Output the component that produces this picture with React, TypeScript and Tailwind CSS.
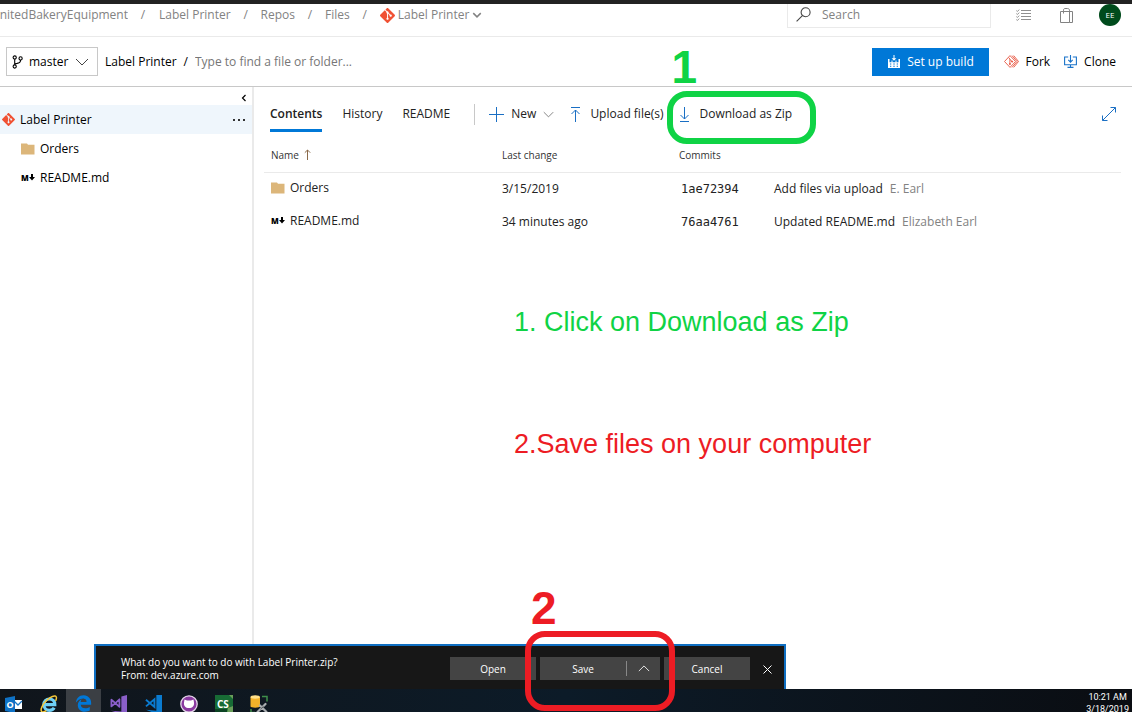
import React from "react";
import { SiGit } from "react-icons/si";
import { FaEdgeLegacy } from "react-icons/fa";

type IconProps = { className?: string };

function Chevron({ className = "" }: IconProps) {
  return (
    <svg viewBox="0 0 14 8" fill="none" stroke="currentColor" className={className} aria-hidden="true">
      <path d="M1 1l6 6 6-6" />
    </svg>
  );
}

function SmallChevron({ className = "" }: IconProps) {
  return (
    <svg viewBox="0 0 8 8" fill="none" stroke="currentColor" strokeWidth="1.2" className={className} aria-hidden="true">
      <path d="M1 2.5l3 3 3-3" />
    </svg>
  );
}

function BranchIcon({ className = "" }: IconProps) {
  return (
    <svg viewBox="0 0 11 14" fill="none" stroke="currentColor" strokeWidth="1.1" className={className} aria-hidden="true">
      <circle cx="2.7" cy="2.5" r="1.6" />
      <circle cx="2.7" cy="11.5" r="1.6" />
      <circle cx="8.6" cy="3.4" r="1.6" />
      <path d="M2.7 4.2v5.6M8.6 5c0 2.6-1.6 3.2-3.6 3.4-1.4.1-2.1.6-2.3 1.4" />
    </svg>
  );
}

function SearchIcon({ className = "" }: IconProps) {
  return (
    <svg viewBox="0 0 15 15" fill="none" stroke="currentColor" strokeWidth="1.1" className={className} aria-hidden="true">
      <circle cx="9.6" cy="5.3" r="4.5" />
      <path d="M6.4 8.6L.6 14.4" />
    </svg>
  );
}

function ListIcon({ className = "" }: IconProps) {
  return (
    <svg viewBox="0 0 15 12" fill="none" stroke="currentColor" strokeWidth="0.9" className={className} aria-hidden="true">
      <path d="M5 1.5h10M5 4.5h10M5 7.5h10M5 10.5h10" />
      <path d="M.4 1.6l1 .9L3.2.6M.4 4.6l1 .9 1.8-1.9M.4 7.6l1 .9 1.8-1.9M.4 10.6l1 .9 1.8-1.9" />
    </svg>
  );
}

function BagIcon({ className = "" }: IconProps) {
  return (
    <svg viewBox="0 0 13 15" fill="none" stroke="currentColor" className={className} aria-hidden="true">
      <path d="M.5 3.5h9v11h-9zM9.5 3.5h3v11h-3" />
      <path d="M3.5 5.5V2.2C3.5 1.200 4 .5 5 .5h2.500c1.200 0 2 .8 2 1.700v12" />
    </svg>
  );
}

function BuildIcon({ className = "" }: IconProps) {
  return (
    <svg viewBox="0 0 12 13" fill="currentColor" className={className} aria-hidden="true">
      <path d="M5.500 0h1v3.300h1.900L6 5.700 3.600 3.300h1.900z" />
      <path
        fillRule="evenodd"
        d="M0 4h1.500v3.200h2V5.400h1v1.800h3V5.400h1v1.800h2V4H12v9H0zM2 8.500v1h1.300v-1zm3.300 0v1h1.400v-1zm3.400 0v1H10v-1zM2 10.700v1h1.300v-1zm3.300 0v1h1.400v-1zm3.400 0v1H10v-1z"
      />
    </svg>
  );
}

function ForkIcon({ className = "" }: IconProps) {
  return (
    <svg viewBox="0 0 15 13" fill="none" stroke="currentColor" strokeLinejoin="round" strokeWidth="0.9" className={className} aria-hidden="true">
      <path d="M6 .6l5.500 5.900L6 12.400.5 6.500z" />
      <path d="M8 .6l5 5.900-5 5.900M9.700.6l4.800 5.900-4.800 5.900" />
      <path d="M4.600 2.500l1.300 1.500v5M5.900 4.400l2.300 2.200" />
      <circle cx="5.900" cy="9" r=".6" fill="currentColor" />
      <circle cx="8.100" cy="6.600" r=".6" fill="currentColor" />
    </svg>
  );
}

function CloneIcon({ className = "" }: IconProps) {
  return (
    <svg viewBox="0 0 13 13" fill="none" stroke="currentColor" strokeWidth="1.1" className={className} aria-hidden="true">
      <path d="M4.200 2H.6v7.800h11.800V2H8.800M6.500 0v7M4.300 4.900l2.200 2.200 2.200-2.200M6.500 10v2.300M3.500 12.400h6" />
    </svg>
  );
}

function PlusIcon({ className = "" }: IconProps) {
  return (
    <svg viewBox="0 0 15 15" fill="none" stroke="currentColor" className={className} aria-hidden="true">
      <path d="M7.500 0v15M0 7.500h15" />
    </svg>
  );
}

function UploadIcon({ className = "" }: IconProps) {
  return (
    <svg viewBox="0 0 11 15" fill="none" stroke="currentColor" className={className} aria-hidden="true">
      <path d="M1 .5h9M5.500 15V3M1.500 7l4-4 4 4" />
    </svg>
  );
}

function DownloadIcon({ className = "" }: IconProps) {
  return (
    <svg viewBox="0 0 11 15" fill="none" stroke="currentColor" className={className} aria-hidden="true">
      <path d="M1 14.500h9M5.500 0v12M1.500 8l4 4 4-4" />
    </svg>
  );
}

function ExpandIcon({ className = "" }: IconProps) {
  return (
    <svg viewBox="0 0 14 14" fill="none" stroke="currentColor" className={className} aria-hidden="true">
      <path d="M.5 13.500l13-13M8.500.5h5v5M.5 8.500v5h5" />
    </svg>
  );
}

function FolderIcon() {
  return (
    <svg viewBox="0 0 14 12" className="h-3 w-[14px] shrink-0" fill="#dcb67a" aria-hidden="true">
      <path d="M0 .5h6l1 1.300h6.500V11.500H0z" />
    </svg>
  );
}

function MarkdownIcon() {
  return (
    <span className="flex w-[14px] shrink-0 items-center text-[8px] leading-[10px] font-extrabold text-black" aria-hidden="true">
      M
      <svg viewBox="0 0 6 7" className="h-[7px] w-[6px]" fill="currentColor">
        <path d="M2 0h2v3h2L3 6.500 0 3h2z" />
      </svg>
    </span>
  );
}

function VsIcon({ className = "" }: IconProps) {
  return (
    <svg viewBox="0 0 18 20" className={className} aria-hidden="true">
      <path fill="currentColor" d="M12 1.500l6-1.500v18l-6 2-11-3.500 11 1z" />
      <path fill="none" stroke="currentColor" strokeWidth="1.900" strokeLinejoin="round" d="M1.500 5v7l4.200-3.500zM10 4.500v8L5.700 8.500z" />
    </svg>
  );
}

function VsCodeIcon({ className = "" }: IconProps) {
  return (
    <svg viewBox="0 0 18 20" className={className} aria-hidden="true">
      <path fill="currentColor" d="M12 0h6v18l-6 2L1 15.500l11 1z" />
      <path fill="none" stroke="currentColor" strokeWidth="2" d="M1 5l9 7.500v-8L1 12" />
    </svg>
  );
}

function OutlookIcon() {
  return (
    <svg viewBox="0 0 18 18" className="h-[18px] w-[18px]" aria-hidden="true">
      <path fill="#fff" d="M9 5h8v9H9z" />
      <path fill="none" stroke="#1976c5" strokeWidth="1.300" d="M9 6l4 4 4-4" />
      <path fill="#0f72c6" d="M0 3l10-2v17L0 16z" />
      <text x="1.500" y="13" fill="#fff" fontSize="9" fontWeight="700" fontFamily="Open Sans, sans-serif">O</text>
    </svg>
  );
}

function ExplorerIcon() {
  return (
    <svg viewBox="0 0 18 18" className="h-[18px] w-[18px]" fill="none" aria-hidden="true">
      <path stroke="#6fd0f5" strokeWidth="3.200" d="M4.500 9.700h10.300c0-3.600-2.400-5.700-5.400-5.700-3.200 0-5.600 2.400-5.600 5.600s2.400 5.800 5.600 5.800c2.200 0 3.900-1 4.800-2.600" />
      <path stroke="#f4c83a" strokeWidth="1.500" strokeLinecap="round" d="M15.800 5.500c1-2.400.9-4.200-.6-4.500-2.700-.6-8 3-11.200 7.400C1.200 12.200.4 15.600 1.800 16.600c.9.600 2.400.2 4-.7" />
    </svg>
  );
}

function GitHubIcon() {
  return (
    <svg viewBox="0 0 18 18" className="h-[18px] w-[18px]" aria-hidden="true">
      <circle cx="9" cy="9" r="8.200" fill="#8a3aa0" stroke="#e3d5e8" strokeWidth="1.300" />
      <path fill="#fff" d="M4.500 4.500l2.500 1h4l2.500-1 .5 3c.5 3.500-1.500 5.500-5 5.500S3.500 11 4 7.500z" />
    </svg>
  );
}

function CsIcon() {
  return (
    <svg viewBox="0 0 18 18" className="h-[18px] w-[18px]" aria-hidden="true">
      <path fill="#176b35" d="M0 0h18v18H0z" />
      <path fill="#6a9f5a" d="M14 0h4v4zM13 13l5-2v7h-6z" />
      <path fill="#0c4423" d="M0 14h12v4H0z" />
      <text x="2" y="12.500" fill="#fff" fontSize="10" fontWeight="700" fontFamily="Open Sans, sans-serif">CS</text>
    </svg>
  );
}

function SqlIcon() {
  return (
    <svg viewBox="0 0 18 18" className="h-[18px] w-[18px]" aria-hidden="true">
      <path fill="#f3b229" d="M.5 2v9.500c0 1.500 9.500 1.500 9.500 0V2z" />
      <ellipse cx="5.200" cy="2" rx="4.700" ry="1.700" fill="#ffe08a" />
      <path fill="none" stroke="#3f8f4b" strokeWidth="1.500" d="M12 1.500h5v5M1 14v3.500h4" />
      <path stroke="#a9adb0" strokeWidth="2.200" strokeLinecap="round" d="M7.500 17l8-8M10 10.500l6.500 6.500" />
      <path stroke="#33383c" strokeWidth=".8" d="M10.500 14.200l3-2.800" />
    </svg>
  );
}

function Crumb({ children }: { children: React.ReactNode }) {
  return (
    <>
      <a href="#crumb" className="whitespace-nowrap">{children}</a>
      <span className="w-[6px] text-center">/</span>
    </>
  );
}

function Header() {
  return (
    <header className="flex h-[33px] shrink-0 items-start border-b border-[#eaeaea] text-[#828282]">
      <nav aria-label="Breadcrumb" className="flex h-[22px] items-center gap-3">
        <a href="#org" className="flex w-[128px] justify-end overflow-hidden whitespace-nowrap">UnitedBakeryEquipment</a>
        <span className="mr-[1px] w-[6px] text-center">/</span>
        <Crumb>Label Printer</Crumb>
        <Crumb>Repos</Crumb>
        <Crumb>Files</Crumb>
        <a href="#repo" className="flex items-center gap-[3px] whitespace-nowrap">
          <SiGit className="h-[15px] w-[15px] text-[#f05133]" />
          Label Printer
          <SmallChevron className="h-[10px] w-[10px]" />
        </a>
      </nav>
      <label className="ml-auto flex h-6 w-[204px] items-center gap-[11px] border-x border-b border-[#eaeaea] pb-[2px] pl-2">
        <SearchIcon className="h-[15px] w-[15px] shrink-0 text-[#444]" />
        <input aria-label="Search" placeholder="Search" className="w-full min-w-0 outline-none placeholder:text-[#828282]" />
      </label>
      <div className="ml-[25px] mr-[11px] flex h-[22px] items-center">
        <button aria-label="Work items"><ListIcon className="h-3 w-[15px]" /></button>
        <button aria-label="Marketplace" className="ml-[29px]"><BagIcon className="h-[15px] w-[13px]" /></button>
        <button className="ml-[26px] flex h-[22px] w-[22px] items-center justify-center rounded-full bg-[#004b1c] text-[8px] text-white">EE</button>
      </div>
    </header>
  );
}

function RepoBar() {
  return (
    <div className="flex h-[50px] shrink-0 items-center border-b border-[#c8c8c8] pr-4 pl-[6px] text-black">
      <button className="flex h-[29px] w-[92px] items-center border border-[#c8c8c8] pl-[5px]">
        <BranchIcon className="h-[14px] w-[11px]" />
        <span className="ml-[6px]">master</span>
        <Chevron className="ml-auto mr-2 h-[8px] w-[14px] text-[#444]" />
      </button>
      <a href="#root-folder" className="ml-[7px] whitespace-nowrap">Label Printer</a>
      <span className="mx-[7px]">/</span>
      <input aria-label="Find a file or folder" placeholder="Type to find a file or folder..." className="min-w-0 flex-1 outline-none placeholder:text-[#767676]" />
      <button className="flex h-7 w-[117px] items-center justify-center gap-[7px] bg-[#0078d7] whitespace-nowrap text-white">
        <BuildIcon className="h-[13px] w-3" />
        Set up build
      </button>
      <button className="ml-[15px] flex items-center gap-[6px]">
        <ForkIcon className="h-[13px] w-[15px] text-[#e8553f]" />
        Fork
      </button>
      <button className="ml-[14px] flex items-center gap-[7px]">
        <CloneIcon className="h-[13px] w-[13px] text-[#1a73c9]" />
        Clone
      </button>
    </div>
  );
}

function Sidebar() {
  return (
    <aside className="w-[254px] shrink-0 border-r-2 border-[#eaeaea] text-black">
      <div className="flex h-[18px] items-center justify-end pt-1 pr-[4px]">
        <button aria-label="Collapse" className="flex"><SmallChevron className="h-2 w-2 rotate-90" /></button>
      </div>
      <div className="flex h-[29px] items-center gap-[5px] bg-[#eff6fc] px-[2px]">
        <SiGit className="h-[13px] w-[13px] text-[#f05133]" />
        <a href="#label-printer">Label Printer</a>
        <button aria-label="More" className="ml-auto mr-[5px] flex gap-[3px]">
          <span className="h-[2px] w-[2px] bg-[#333]" />
          <span className="h-[2px] w-[2px] bg-[#333]" />
          <span className="h-[2px] w-[2px] bg-[#333]" />
        </button>
      </div>
      <a href="#orders" className="flex h-[29px] items-center gap-[5px] pl-[21px]"><FolderIcon />Orders</a>
      <a href="#readme" className="flex h-[29px] items-center gap-[5px] pl-[21px]"><MarkdownIcon />README.md</a>
    </aside>
  );
}

function Toolbar() {
  return (
    <div className="flex h-[45px] items-center whitespace-nowrap">
      <nav className="flex h-full items-start gap-5" aria-label="Views">
        <a href="#contents" className="mt-3 flex h-[33px] items-start border-b-[3px] border-[#0078d7] pt-[5px] leading-5 font-semibold">Contents</a>
        <a href="#history" className="mt-[17px] leading-5">History</a>
        <a href="#readme-tab" className="mt-[17px] leading-5">README</a>
      </nav>
      <div className="flex h-full flex-1 items-center pt-[9px]">
        <span className="ml-6 h-[21px] w-px bg-[#c8c8c8]" />
        <button className="ml-[14px] flex items-center gap-[7px]">
          <PlusIcon className="h-[15px] w-[15px] text-[#1a6fc4]" />
          New
          <Chevron className="h-[7px] w-[11px] text-[#666]" />
        </button>
        <button className="ml-4 flex items-center gap-[9px]">
          <UploadIcon className="h-[15px] w-[11px] text-[#1a6fc4]" />
          Upload file(s)
        </button>
        <div className="relative ml-4">
          <button className="flex items-center gap-[9px]">
            <DownloadIcon className="h-[15px] w-[11px] text-[#1a6fc4]" />
            Download as Zip
          </button>
          <div className="pointer-events-none absolute -top-[13px] -bottom-5 -left-3 -right-6 rounded-[20px] border-6 border-[#0fd345]" />
          <span className="pointer-events-none absolute -left-2 -top-[60px] font-['Liberation_Sans',sans-serif] text-[46px] leading-[46px] font-bold text-[#0fd345]">1</span>
        </div>
        <button aria-label="Full screen" className="mr-[5px] ml-auto"><ExpandIcon className="h-[14px] w-[14px] text-[#1a6fc4]" /></button>
      </div>
    </div>
  );
}

const files = [
  { name: "Orders", icon: <FolderIcon />, change: "3/15/2019", hash: "1ae72394", message: "Add files via upload", author: "E. Earl" },
  { name: "README.md", icon: <MarkdownIcon />, change: "34 minutes ago", hash: "76aa4761", message: "Updated README.md", author: "Elizabeth Earl" },
];

function FileTable() {
  return (
    <table className="w-full table-fixed border-collapse text-left">
      <colgroup>
        <col className="w-[238px]" />
        <col className="w-[177px]" />
        <col className="w-[95px]" />
        <col />
      </colgroup>
      <thead>
        <tr className="h-10 border-b border-[#eaeaea] text-[10px] text-[#333]">
          <th className="pt-[6px] pl-[7px] font-normal">
            <span className="flex items-center gap-[5px]">
              Name
              <svg viewBox="0 0 7 11" className="h-[11px] w-[7px]" fill="none" stroke="#8a6a4a" aria-hidden="true">
                <path d="M3.500 11V1M.8 3.700L3.500 1l2.700 2.700" />
              </svg>
            </span>
          </th>
          <th className="pt-[6px] font-normal">Last change</th>
          <th className="pt-[6px] font-normal" colSpan={2}>Commits</th>
        </tr>
      </thead>
      <tbody>
        {files.map((file) => (
          <tr key={file.name} className="h-[33px]">
            <td className="pb-[2px] pl-[7px]">
              <a href="#file" className="flex items-center gap-[5px]">{file.icon}{file.name}</a>
            </td>
            <td>{file.change}</td>
            <td className="pl-[2px] font-['DejaVu_Sans_Mono','Liberation_Mono',monospace]">{file.hash}</td>
            <td className="whitespace-nowrap">
              {file.message}
              <span className="ml-[7px] text-[#828282]">{file.author}</span>
            </td>
          </tr>
        ))}
      </tbody>
    </table>
  );
}

function DownloadBar() {
  return (
    <div role="dialog" aria-label="Download" className="absolute bottom-0 left-[94px] flex h-[45px] w-[692px] items-center border-x-2 border-t-2 border-[#0f6fc2] bg-[#171717] pl-[25px] text-[10px] text-white">
      <p className="mt-[3px] leading-[13px] whitespace-nowrap">
        What do you want to do with Label Printer.zip?
        <br />
        From: dev.azure.com
      </p>
      <div className="mt-[2px] ml-auto flex items-center gap-1">
        <button className="h-[23px] w-[86px] bg-[#444]">Open</button>
        <div className="relative flex h-[23px] bg-[#444]">
          <button className="w-[86px]">Save</button>
          <span className="my-1 w-px bg-[#888]" />
          <button aria-label="Save options" className="flex w-[33px] items-center justify-center">
            <Chevron className="h-[7px] w-3 rotate-180" />
          </button>
          <div className="pointer-events-none absolute -top-[26px] -right-[15px] -bottom-[31px] -left-[15px] z-10 rounded-[20px] border-6 border-[#ed1c24]" />
          <span className="pointer-events-none absolute -top-[72px] -left-[9px] font-['Liberation_Sans',sans-serif] text-[46px] leading-[46px] font-bold text-[#ed1c24]">2</span>
        </div>
        <button className="h-[23px] w-[86px] bg-[#444]">Cancel</button>
      </div>
      <button aria-label="Close" className="mr-3 ml-[13px] pt-1">
        <svg viewBox="0 0 9 9" className="h-[9px] w-[9px]" fill="none" stroke="currentColor" aria-hidden="true">
          <path d="M.5.5l8 8M8.500.5l-8 8" />
        </svg>
      </button>
    </div>
  );
}

const apps = [
  { name: "Outlook", active: false, icon: <OutlookIcon /> },
  { name: "Internet Explorer", active: false, icon: <ExplorerIcon /> },
  { name: "Edge", active: true, icon: <FaEdgeLegacy className="h-[17px] w-[17px] text-[#0078d7]" /> },
  { name: "Visual Studio", active: false, icon: <VsIcon className="h-[19px] w-[17px] text-[#8a5fc9]" /> },
  { name: "Visual Studio Code", active: false, icon: <VsCodeIcon className="h-[19px] w-[17px] text-[#0a7bd0]" /> },
  { name: "GitHub", active: false, icon: <GitHubIcon /> },
  { name: "CS", active: false, icon: <CsIcon /> },
  { name: "SQL tools", active: false, icon: <SqlIcon /> },
];

function Taskbar() {
  return (
    <footer className="flex h-[23px] shrink-0 items-start overflow-hidden bg-linear-to-r from-[#10151b] via-[#0c1b28] to-[#0a0d12] text-white">
      <div className="-ml-1 flex">
        {apps.map((app) => (
          <button key={app.name} aria-label={app.name} className={`flex h-[30px] w-[35px] items-start justify-center pt-[6px] ${app.active ? "bg-[#3b3f44]" : ""}`}>
            {app.icon}
          </button>
        ))}
      </div>
      <p className="mt-[2px] mr-[3px] ml-auto text-center font-['Roboto',sans-serif] text-[9px] leading-3">
        10:21 AM
        <br />
        3/18/2019
      </p>
    </footer>
  );
}

export default function App() {
  return (
    <div className="flex h-screen flex-col overflow-hidden bg-white font-['Open_Sans','Noto_Sans',sans-serif] text-[12px] leading-5 text-[#222]">
      <div className="h-1 shrink-0 bg-[#222]" />
      <Header />
      <RepoBar />
      <div className="relative flex min-h-0 flex-1">
        <Sidebar />
        <main className="min-w-0 flex-1 pr-[11px] pl-[10px]">
          <div className="pl-[6px]"><Toolbar /></div>
          <FileTable />
          <div className="mt-[64px] ml-[250px] font-['Liberation_Sans',sans-serif] text-[27px] leading-[40px]">
            <p className="text-[#0fd345]">1. Click on Download as Zip</p>
            <p className="mt-[82px] text-[#ed1c24]">2.Save files on your computer</p>
          </div>
        </main>
        <DownloadBar />
      </div>
      <Taskbar />
    </div>
  );
}
